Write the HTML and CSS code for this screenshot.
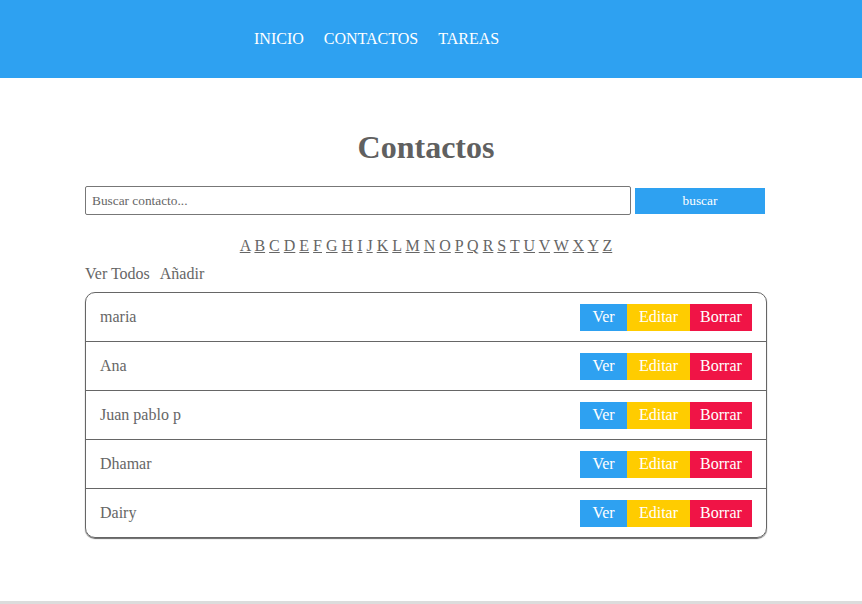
FILE: index.html
```html
<!DOCTYPE html>
<html lang="es">
<head>
<meta charset="utf-8">
<title>Contactos</title>
<link rel="stylesheet" href="styles.css">
</head>
<body>
<header class="topbar">
  <nav class="nav">
    <a href="#">INICIO</a>
    <a href="#">CONTACTOS</a>
    <a href="#">TAREAS</a>
  </nav>
</header>
<main class="page">
  <h1 class="title">Contactos</h1>
  <form class="search">
    <input class="search-input" type="text" placeholder="Buscar contacto..."><button class="search-btn" type="button">buscar</button>
  </form>
  <div class="letters">
    <a href="#">A</a> <a href="#">B</a> <a href="#">C</a> <a href="#">D</a> <a href="#">E</a> <a href="#">F</a> <a href="#">G</a> <a href="#">H</a> <a href="#">I</a> <a href="#">J</a> <a href="#">K</a> <a href="#">L</a> <a href="#">M</a> <a href="#">N</a> <a href="#">O</a> <a href="#">P</a> <a href="#">Q</a> <a href="#">R</a> <a href="#">S</a> <a href="#">T</a> <a href="#">U</a> <a href="#">V</a> <a href="#">W</a> <a href="#">X</a> <a href="#">Y</a> <a href="#">Z</a>
  </div>
  <div class="actions">
    <a href="#">Ver Todos</a>
    <a href="#">Añadir</a>
  </div>
  <ul class="list">
    <li class="row"><span class="name">maria</span><span class="btns"><a class="btn ver" href="#">Ver</a><a class="btn edit" href="#">Editar</a><a class="btn del" href="#">Borrar</a></span></li>
    <li class="row"><span class="name">Ana</span><span class="btns"><a class="btn ver" href="#">Ver</a><a class="btn edit" href="#">Editar</a><a class="btn del" href="#">Borrar</a></span></li>
    <li class="row"><span class="name">Juan pablo p</span><span class="btns"><a class="btn ver" href="#">Ver</a><a class="btn edit" href="#">Editar</a><a class="btn del" href="#">Borrar</a></span></li>
    <li class="row"><span class="name">Dhamar</span><span class="btns"><a class="btn ver" href="#">Ver</a><a class="btn edit" href="#">Editar</a><a class="btn del" href="#">Borrar</a></span></li>
    <li class="row"><span class="name">Dairy</span><span class="btns"><a class="btn ver" href="#">Ver</a><a class="btn edit" href="#">Editar</a><a class="btn del" href="#">Borrar</a></span></li>
  </ul>
</main>
<footer class="footer"></footer>
</body>
</html>
```
FILE: styles.css
```css
* { box-sizing: border-box; }
body {
  margin: 0;
  font-family: "Liberation Serif", "Times New Roman", serif;
  font-size: 16px;
  color: #666;
  background: #fff;
}
.topbar {
  background: #2ea1f1;
  height: 78px;
  display: flex;
  align-items: center;
}
.nav {
  padding-left: 254px;
  display: flex;
  gap: 20px;
}
.nav a {
  color: #fff;
  text-decoration: none;
  font-size: 16px;
}
.page {
  margin-left: 85px;
  width: 682px;
}
.title {
  text-align: center;
  font-size: 32px;
  font-weight: bold;
  color: #606060;
  margin: 51px 0 0;
  line-height: 37px;
}
.search {
  margin-top: 20px;
  display: flex;
  align-items: center;
  gap: 4px;
}
.search-input {
  width: 546px;
  height: 29px;
  border: 1px solid #777;
  border-radius: 2px;
  padding: 0 6px;
  font-family: inherit;
  font-size: 13.333px;
  color: #666;
}
.search-input::placeholder { color: #666; }
.search-btn {
  width: 130px;
  height: 26px;
  border: 0;
  background: #2ea1f1;
  color: #fff;
  font-family: inherit;
  font-size: 13.333px;
  padding: 0;
}
.letters {
  text-align: center;
  margin-top: 22px;
  line-height: 18px;
}
.letters a {
  color: #666;
  text-decoration: underline;
}
.actions {
  margin-top: 10px;
  display: flex;
  gap: 10px;
  line-height: 18px;
}
.actions a {
  color: #666;
  text-decoration: none;
}
.list {
  list-style: none;
  margin: 9px 0 0;
  padding: 0;
  border: 1px solid #666;
  border-radius: 10px;
  box-shadow: 0 1px 1px #666;
  overflow: hidden;
}
.row {
  height: 49px;
  display: flex;
  align-items: center;
  justify-content: space-between;
  padding: 0 14px;
  border-bottom: 1px solid #666;
}
.row:last-child { border-bottom: 0; height: 48px; }
.btns { display: flex; }
.btn {
  height: 27px;
  display: flex;
  align-items: center;
  justify-content: center;
  color: #fff;
  text-decoration: none;
  font-size: 16px;
}
.ver { background: #2ea1f1; width: 47px; }
.edit { background: #ffcc00; width: 63px; }
.del { background: #f01446; width: 62px; }
.footer {
  margin-top: 63px;
  border-top: 3px solid #dcdcdc;
  height: 3px;
}
```
